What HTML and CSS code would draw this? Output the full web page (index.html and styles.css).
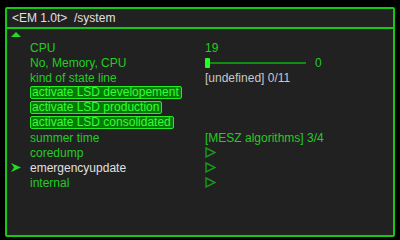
FILE: index.html
```html
<!DOCTYPE html>
<html lang="en">

<head>
    <meta charset="UTF-8">
    <title>EM system</title>
    <link rel="stylesheet" href="styles.css">
</head>

<body>
    <div class="panel">
        <div class="header">&lt;EM 1.0t&gt;&nbsp; /system</div>
        <div class="menu">
            <div class="scrollUp"></div>
            <div class="row"><span class="label">CPU</span><span class="value">19</span></div>
            <div class="row">
                <span class="label">No, Memory, CPU</span>
                <span class="value slider"><span class="knob"></span><span class="track"></span><span class="sliderVal">0</span></span>
            </div>
            <div class="row"><span class="label">kind of state line</span><span class="value grey">[undefined] 0/11</span></div>
            <div class="row"><span class="label active">activate LSD developement</span></div>
            <div class="row"><span class="label active">activate LSD production</span></div>
            <div class="row"><span class="label active">activate LSD consolidated</span></div>
            <div class="row"><span class="label">summer time</span><span class="value">[MESZ algorithms] 3/4</span></div>
            <div class="row">
                <span class="label">coredump</span>
                <span class="value"><svg class="tri" width="11" height="11" viewBox="0 0 11 11"><path d="M1 1 L10 5.5 L1 10 Z" fill="none" stroke="#159d15" stroke-width="1.4" stroke-linejoin="miter"/></svg></span>
            </div>
            <div class="row selected">
                <svg class="pointer" width="10" height="9" viewBox="0 0 10 9"><path d="M0 0 L10 4.5 L0 9 L3 4.5 Z" fill="#22dd22"/></svg>
                <span class="label">emergencyupdate</span>
                <span class="value"><svg class="tri" width="11" height="11" viewBox="0 0 11 11"><path d="M1 1 L10 5.5 L1 10 Z" fill="none" stroke="#159d15" stroke-width="1.4"/></svg></span>
            </div>
            <div class="row">
                <span class="label">internal</span>
                <span class="value"><svg class="tri" width="11" height="11" viewBox="0 0 11 11"><path d="M1 1 L10 5.5 L1 10 Z" fill="none" stroke="#159d15" stroke-width="1.4"/></svg></span>
            </div>
        </div>
    </div>
</body>

</html>
```

FILE: styles.css
```css
* {
    margin: 0;
    padding: 0;
    box-sizing: border-box;
}

body {
    background-color: #000;
    width: 400px;
    height: 240px;
    padding: 7px 5px 3px 5px;
    font-family: "Liberation Sans", Arial, sans-serif;
    font-size: 12px;
    color: #22cc22;
}

.panel {
    height: 230px;
    width: 390px;
    background-color: #212121;
    border: 2px solid #14c814;
    border-radius: 2px;
}

.header {
    height: 20px;
    border-bottom: 2px solid #14c814;
    color: #e0e0e0;
    padding: 2px 0 0 5px;
    line-height: 14px;
}

.menu {
    padding-top: 3px;
}

.scrollUp {
    width: 0;
    height: 0;
    margin-left: 4px;
    border-left: 5px solid transparent;
    border-right: 5px solid transparent;
    border-bottom: 5px solid #22dd22;
    margin-bottom: 3px;
}

.row {
    display: flex;
    align-items: center;
    height: 15px;
    position: relative;
}

.label {
    margin-left: 23px;
    width: 175px;
    white-space: nowrap;
}

.label.active {
    width: auto;
    height: 13px;
    line-height: 11px;
    margin-left: 23px;
    padding: 0 2px 0 1px;
    background-color: #067a06;
    border: 1px solid #22ee22;
    border-radius: 2px;
    color: #33ff33;
}

.value {
    display: flex;
    align-items: center;
}

.grey {
    color: #c8c8c8;
}

.slider {
    height: 15px;
}

.knob {
    width: 5px;
    height: 10px;
    background-color: #22ff22;
    border-radius: 1px;
}

.track {
    width: 96px;
    height: 2px;
    background-color: #0f8f0f;
}

.sliderVal {
    margin-left: 9px;
}

.tri {
    display: block;
}

.pointer {
    position: absolute;
    left: 4px;
    top: 3px;
}

.selected .label {
    color: #e0e0e0;
}
```
